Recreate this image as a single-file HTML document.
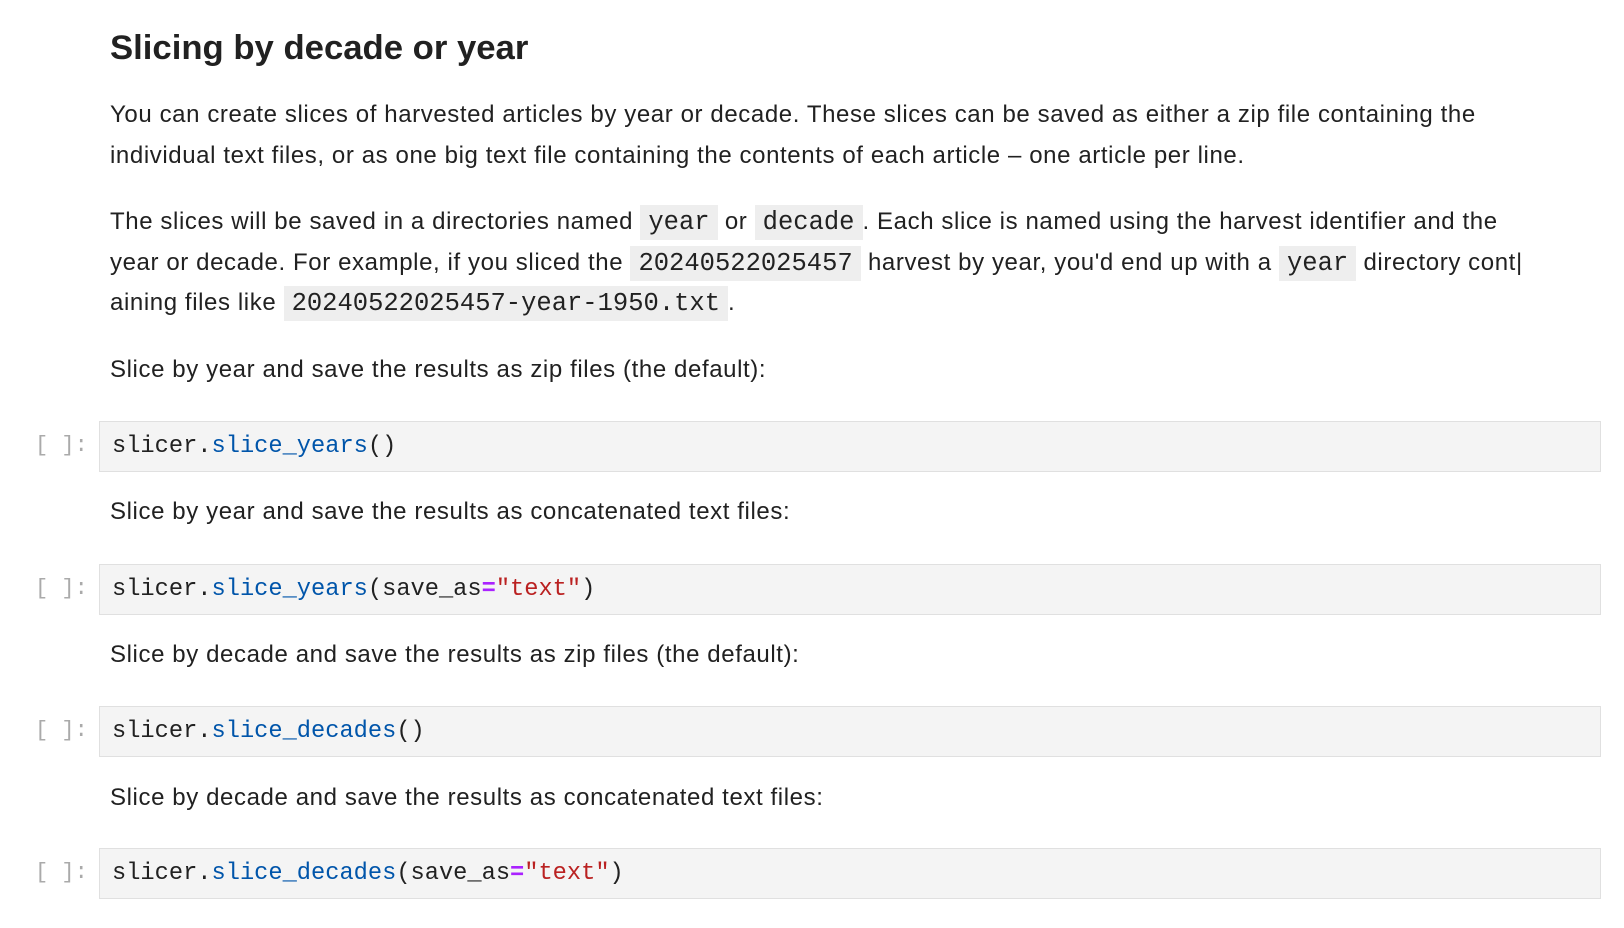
<!DOCTYPE html>
<html><head><meta charset="utf-8"><style>
body{margin:0;width:1624px;height:928px;background:#fff;position:relative;overflow:hidden;font-family:"Liberation Sans",sans-serif;color:#212121}
.l{position:absolute;left:110px;white-space:nowrap;font-size:24px;letter-spacing:0.6px;line-height:40px;height:40px}
h1{position:absolute;left:110px;top:27px;margin:0;font-size:34.7px;line-height:42px;font-weight:bold;white-space:nowrap;color:#212121}
code{font-family:"Liberation Mono",monospace;font-size:25.5px;letter-spacing:0;background:#eee;padding:3px 8px}
.box{position:absolute;left:99px;width:1500px;height:49px;background:#f4f4f4;border:1px solid #e0e0e0}
.box span.c{position:absolute;left:12px;top:0;line-height:49px;font-family:"Liberation Mono",monospace;font-size:23.7px;color:#212121;white-space:nowrap}
.p{position:absolute;left:35px;font-family:"Liberation Mono",monospace;font-size:22px;color:#aaa;line-height:49px}
.f{color:#0055aa}.s{color:#ba2121}.o{color:#aa22ff;font-weight:bold}
</style></head><body>
<h1>Slicing by decade or year</h1>
<div class="l" style="top:95px">You can create slices of harvested articles by year or decade. These slices can be saved as either a zip file containing the</div>
<div class="l" style="top:136px">individual text files, or as one big text file containing the contents of each article – one article per line.</div>
<div class="l" style="top:202px">The slices will be saved in a directories named <code>year</code> or <code>decade</code>. Each slice is named using the harvest identifier and the</div>
<div class="l" style="top:243px">year or decade. For example, if you sliced the <code>20240522025457</code> harvest by year, you'd end up with a <code>year</code> directory cont|</div>
<div class="l" style="top:283px">aining files like <code>20240522025457-year-1950.txt</code>.</div>
<div class="l" style="top:350px">Slice by year and save the results as zip files (the default):</div>
<div class="p" style="top:421px">[ ]:</div>
<div class="box" style="top:421px"><span class="c">slicer.<span class="f">slice_years</span>()</span></div>
<div class="l" style="top:492px">Slice by year and save the results as concatenated text files:</div>
<div class="p" style="top:564px">[ ]:</div>
<div class="box" style="top:564px"><span class="c">slicer.<span class="f">slice_years</span>(save_as<span class="o">=</span><span class="s">"text"</span>)</span></div>
<div class="l" style="top:635px">Slice by decade and save the results as zip files (the default):</div>
<div class="p" style="top:706px">[ ]:</div>
<div class="box" style="top:706px"><span class="c">slicer.<span class="f">slice_decades</span>()</span></div>
<div class="l" style="top:778px">Slice by decade and save the results as concatenated text files:</div>
<div class="p" style="top:848px">[ ]:</div>
<div class="box" style="top:848px"><span class="c">slicer.<span class="f">slice_decades</span>(save_as<span class="o">=</span><span class="s">"text"</span>)</span></div>
</body></html>
